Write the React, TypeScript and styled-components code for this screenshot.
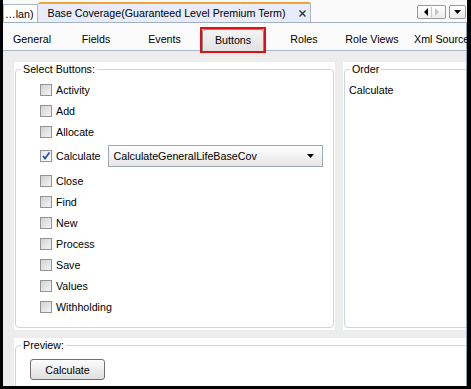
import styled, { createGlobalStyle } from 'styled-components'

const GlobalStyle = createGlobalStyle`
  html, body {
    margin: 0;
    padding: 0;
    background: #ffffff;
  }
  body {
    font-family: "Liberation Sans", Arial, sans-serif;
    font-size: 10.7px;
    color: #000;
  }
`

const subTabs = [
  { label: 'General', width: 58 },
  { label: 'Fields', width: 70 },
  { label: 'Events', width: 67 },
  { label: 'Buttons', width: 62, selected: true },
  { label: 'Roles', width: 72 },
  { label: 'Role Views', width: 64 },
  { label: 'Xml Source', width: 62, left: true },
]

const buttons = [
  'Activity',
  'Add',
  'Allocate',
  'Calculate',
  'Close',
  'Find',
  'New',
  'Process',
  'Save',
  'Values',
  'Withholding',
]

const App = () => {
  return (
    <>
      <GlobalStyle />
      <Frame>
        <TabStrip>
          <DocTab>…lan)</DocTab>
          <DocTab active>
            Base Coverage(Guaranteed Level Premium Term)
            <CloseIcon width="7" height="7" viewBox="0 0 7 7">
              <path d="M0.5 0.5 L6.5 6.5 M6.5 0.5 L0.5 6.5" stroke="#333" strokeWidth="1.4" />
            </CloseIcon>
          </DocTab>
          <StripControls>
            <ScrollBox wide>
              <svg width="27" height="12" viewBox="0 0 27 12">
                <path d="M6 6 L10 2 L10 10 Z" fill="#000" />
                <line x1="13.5" y1="1" x2="13.5" y2="11" stroke="#c8c8c8" />
                <path d="M21 6 L17 2 L17 10 Z" fill="#c4c4c4" />
              </svg>
            </ScrollBox>
            <ScrollBox>
              <svg width="15" height="12" viewBox="0 0 15 12">
                <path d="M4 4 L11 4 L7.5 8 Z" fill="#000" />
              </svg>
            </ScrollBox>
          </StripControls>
        </TabStrip>

        <Editor>
          <SubTabBar>
            {subTabs.map((t) =>
              t.selected ? (
                <Highlight key={t.label}>
                  <SubTab w={t.width} selected>
                    {t.label}
                  </SubTab>
                </Highlight>
              ) : (
                <SubTab key={t.label} w={t.width} left={t.left}>
                  {t.label}
                </SubTab>
              )
            )}
          </SubTabBar>

          <Content>
            <TopRow>
              <Panel w={321}>
                <Group>
                  <Legend>Select Buttons:</Legend>
                  <CheckList>
                    {buttons.map((b) => (
                      <CheckRow key={b} tall={b === 'Calculate'}>
                        <CheckBox checked={b === 'Calculate'}>
                          {b === 'Calculate' && (
                            <svg width="10" height="10" viewBox="0 0 10 10">
                              <path d="M2 5 L4 7.5 L8.5 1.5" stroke="#2a4fb0" strokeWidth="1.8" fill="none" />
                            </svg>
                          )}
                        </CheckBox>
                        <CheckLabel>{b}</CheckLabel>
                        {b === 'Calculate' && (
                          <Combo>
                            <ComboText>CalculateGeneralLifeBaseCov</ComboText>
                            <svg width="7" height="4" viewBox="0 0 7 4">
                              <path d="M0 0 L7 0 L3.5 4 Z" fill="#000" />
                            </svg>
                          </Combo>
                        )}
                      </CheckRow>
                    ))}
                  </CheckList>
                </Group>
              </Panel>

              <Panel>
                <Group clipRight>
                  <Legend>Order</Legend>
                  <OrderList>
                    <OrderItem>Calculate</OrderItem>
                  </OrderList>
                </Group>
              </Panel>
            </TopRow>

            <PreviewPanel>
              <Group clipRight tall>
                <Legend>Preview:</Legend>
                <PreviewBody>
                  <PushButton>Calculate</PushButton>
                </PreviewBody>
              </Group>
            </PreviewPanel>
          </Content>
        </Editor>
      </Frame>
    </>
  )
}

export default App

const Frame = styled.div`
width: 471px;
height: 389px;
box-sizing: border-box;
border-left: 3px solid #000;
border-right: 4px solid #000;
border-bottom: 3px solid #000;
display: flex;
flex-direction: column;
overflow: hidden;
background: #fff;
`

const TabStrip = styled.div`
height: 23px;
flex-shrink: 0;
box-sizing: border-box;
border-bottom: 1px solid #9fb2c4;
background: #fafafa;
display: flex;
align-items: flex-end;
`

const DocTab = styled.div<{ active?: boolean }>`
height: ${(p) => (p.active ? '20px' : '18px')};
box-sizing: border-box;
display: flex;
align-items: center;
gap: 13px;
white-space: nowrap;
padding: ${(p) => (p.active ? '0 4px 0 10px' : '0 3px 0 1px')};
background: ${(p) => (p.active ? '#e8ebf9' : '#ffffff')};
border: 1px solid #a9b7c6;
border-left: ${(p) => (p.active ? 'none' : '1px solid #a9b7c6')};
border-bottom: none;
border-top: ${(p) => (p.active ? '2px solid #f2a33a' : '1px solid #a9b7c6')};
border-radius: ${(p) => (p.active ? '2px 2px 0 0' : '0')};
`

const CloseIcon = styled.svg`
margin-top: 1px;
`

const StripControls = styled.div`
margin-left: auto;
align-self: center;
display: flex;
gap: 3px;
margin-right: 1px;
margin-top: 2px;
`

const ScrollBox = styled.div<{ wide?: boolean }>`
width: ${(p) => (p.wide ? '27px' : '15px')};
height: 12px;
border: 1px solid #9a9a9a;
border-radius: 2px;
background: linear-gradient(#ffffff, #ececec);
display: flex;
`

const Editor = styled.div`
flex: 1;
display: flex;
flex-direction: column;
border-right: 1px solid #8da5ba;
min-height: 0;
`

const SubTabBar = styled.div`
height: 28px;
flex-shrink: 0;
box-sizing: border-box;
border-bottom: 1px solid #a6b8c8;
background: #fbfbfb;
display: flex;
align-items: flex-end;
position: relative;
z-index: 1;
`

const Highlight = styled.div`
margin: 0 4px;
display: flex;
outline: 2px solid #e01010;
outline-offset: 0;
position: relative;
top: 1px;
`

const SubTab = styled.div<{ w: number; selected?: boolean; left?: boolean }>`
width: ${(p) => p.w}px;
flex-shrink: 0;
height: 22px;
box-sizing: border-box;
display: flex;
align-items: center;
justify-content: ${(p) => (p.left ? 'flex-start' : 'center')};
padding-left: ${(p) => (p.left ? '10px' : '0')};
padding-bottom: 1px;
white-space: nowrap;
${(p) =>
  p.selected &&
  `
  background: linear-gradient(#f4f4f4, #e2e2e2);
  border: 1px solid #8a8a8a;
  border-bottom: none;
  border-radius: 3px 3px 0 0;
  `}
`

const Content = styled.div`
flex: 1;
min-height: 0;
overflow: hidden;
background: #ededed;
padding: 11px 0 0 11px;
display: flex;
flex-direction: column;
gap: 8px;
`

const TopRow = styled.div`
height: 268px;
flex-shrink: 0;
display: flex;
gap: 8px;
`

const Panel = styled.div<{ w?: number }>`
${(p) => (p.w ? `width: ${p.w}px;` : 'flex: 1;')}
min-width: 0;
box-sizing: border-box;
background: #fff;
padding: 0 1px 2px 1px;
display: flex;
`

const PreviewPanel = styled.div`
flex: 1;
background: #fff;
padding: 0 1px;
display: flex;
align-items: flex-start;
`

const Group = styled.fieldset<{ clipRight?: boolean; tall?: boolean }>`
flex: 1;
min-width: 0;
margin: 0;
padding: 0;
border: 1px solid #c8d7e0;
border-radius: 4px;
${(p) => (p.clipRight ? 'margin-right: -4px;' : '')}
${(p) => (p.tall ? 'height: 120px; flex-shrink: 0;' : '')}
`

const Legend = styled.legend`
margin-left: 5px;
padding: 0 2px;
line-height: 14px;
`

const CheckList = styled.div`
padding: 3px 0 0 24px;
display: flex;
flex-direction: column;
`

const CheckRow = styled.div<{ tall?: boolean }>`
height: ${(p) => (p.tall ? '28px' : '21px')};
display: flex;
align-items: center;
gap: 4px;
`

const CheckBox = styled.span<{ checked?: boolean }>`
width: 12px;
height: 12px;
box-sizing: border-box;
border: 1px solid #939393;
background: ${(p) =>
  p.checked ? 'linear-gradient(135deg, #e0e4ec, #ffffff)' : 'linear-gradient(135deg, #d2d2d2, #f4f4f4)'};
display: flex;
align-items: center;
justify-content: center;
flex-shrink: 0;
`

const CheckLabel = styled.span`
white-space: nowrap;
`

const Combo = styled.div`
width: 215px;
height: 22px;
box-sizing: border-box;
margin-left: 3px;
border: 1px solid #a3a9b1;
background: linear-gradient(#ffffff, #e6e6e6);
display: flex;
align-items: center;
justify-content: space-between;
padding: 0 8px 0 5px;
`

const ComboText = styled.span`
white-space: nowrap;
`

const OrderList = styled.div`
padding: 7px 0 0 4px;
`

const OrderItem = styled.div`
line-height: 14px;
`

const PreviewBody = styled.div`
padding: 7px 0 0 14px;
`

const PushButton = styled.button`
width: 75px;
height: 21px;
font-family: "Liberation Sans", Arial, sans-serif;
font-size: 10.7px;
color: #000;
border: 1px solid #707070;
border-radius: 3px;
background: linear-gradient(#fdfdfd, #dedede);
padding: 0;
`
